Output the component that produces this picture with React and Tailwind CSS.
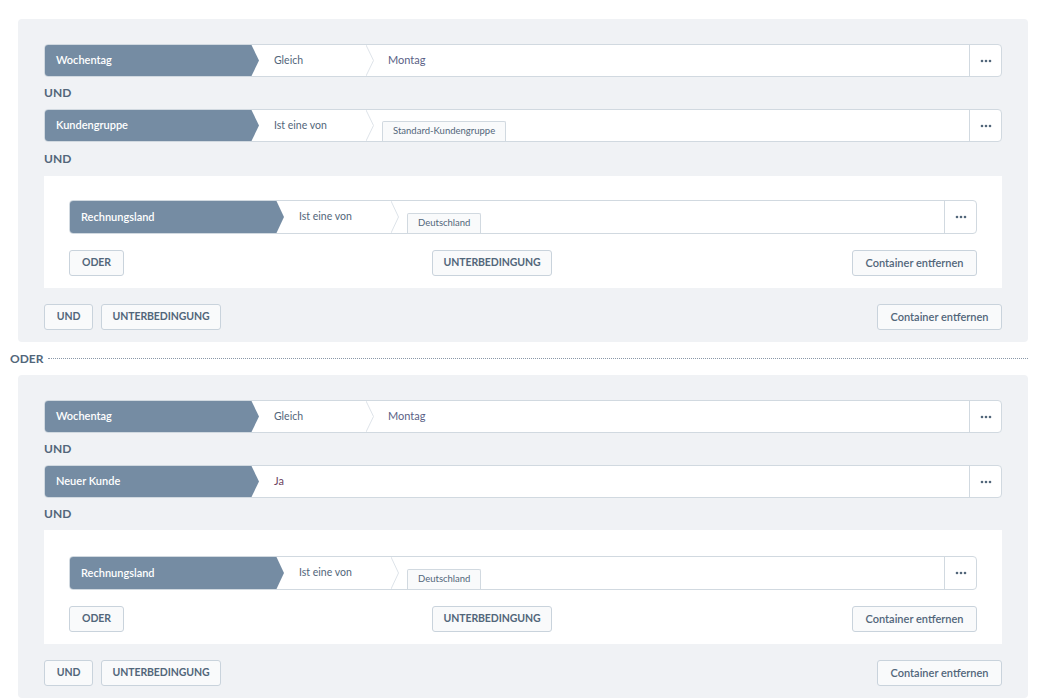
import React from "react";

const FONT = { fontFamily: "Lato, 'Noto Sans', sans-serif" };

function Chevron() {
  return (
    <svg width="8" height="32" viewBox="0 0 8 32" className="shrink-0 h-full" preserveAspectRatio="none">
      <polyline points="0,0 7.5,16 0,32" fill="none" stroke="#dde3e9" strokeWidth="1" />
    </svg>
  );
}

function Dots() {
  return (
    <div className="flex w-[32px] shrink-0 items-center justify-center border-l border-[#d1d9e0]">
      <svg width="12" height="4" viewBox="0 0 12 4">
        <circle cx="2" cy="2" r="1.3" fill="#52667a" />
        <circle cx="6" cy="2" r="1.3" fill="#52667a" />
        <circle cx="10" cy="2" r="1.3" fill="#52667a" />
      </svg>
    </div>
  );
}

function Tag({ children }) {
  return (
    <div className="ml-[8px] flex h-[20px] items-center self-end rounded-t-[2px] border border-b-0 border-[#d1d9e0] bg-[#f9fafb] px-[10px] text-[9.5px] text-[#52667a]">
      {children}
    </div>
  );
}

function Row({ label, op, value, tag, tall }) {
  return (
    <div
      className={
        "flex overflow-hidden rounded-[4px] border border-[#d1d9e0] bg-white " +
        (tall ? "h-[34px]" : "h-[33px]")
      }
    >
      <div className="-my-px -ml-px flex w-[215px] shrink-0 items-center rounded-l-[4px] bg-[#758ca3] pl-[12px] text-[11px] font-semibold text-white [clip-path:polygon(0_0,calc(100%-8px)_0,100%_50%,calc(100%-8px)_100%,0_100%)]">
        {label}
      </div>
      {op ? (
        <>
          <div className="flex w-[107px] shrink-0 items-center pl-[15px] text-[10.5px] text-[#52667a]">{op}</div>
          <Chevron />
          {tag ? (
            <div className="flex flex-1">
              <Tag>{tag}</Tag>
            </div>
          ) : (
            <div className="flex flex-1 items-center pl-[14px] text-[11px] text-[#5a5f86]">{value}</div>
          )}
        </>
      ) : (
        <div className="flex flex-1 items-center pl-[15px] text-[11px] text-[#6b3f5e]">{value}</div>
      )}
      <Dots />
    </div>
  );
}

function Btn({ children, w, upper = true }) {
  return (
    <button
      className={
        "flex h-[26px] shrink-0 items-center justify-center rounded-[3px] border border-[#c9d3dc] bg-[#f9fafb] text-[#52667a] " +
        (upper ? "text-[10.5px] font-bold tracking-[-0.1px]" : "text-[11px] font-semibold")
      }
      style={{ width: w }}
    >
      {children}
    </button>
  );
}

function Group({ second }) {
  return (
    <div className="ml-[8px] rounded-[4px] bg-[#f0f2f5] px-[26px] pt-[25px] pb-[12px]">
      <Row label="Wochentag" op="Gleich" value="Montag" />
      <div className="flex h-[32px] items-center text-[12px] font-bold text-[#52667a]">UND</div>
      {second ? (
        <Row label="Neuer Kunde" value="Ja" />
      ) : (
        <Row label="Kundengruppe" op="Ist eine von" tag="Standard-Kundengruppe" />
      )}
      <div
        className={
          "flex items-center text-[12px] font-bold text-[#52667a] " + (second ? "h-[32px]" : "h-[34px]")
        }
      >
        UND
      </div>
      <div className={"bg-white px-[25px] pb-[12px] " + (second ? "pt-[26px]" : "pt-[24px]")}>
        <Row label="Rechnungsland" op="Ist eine von" tag="Deutschland" tall />
        <div className="mt-[16px] flex items-center">
          <Btn w="55px">ODER</Btn>
          <div className="ml-[308px]">
            <Btn w="120px">UNTERBEDINGUNG</Btn>
          </div>
          <div className="ml-auto">
            <Btn w="125px" upper={false}>Container entfernen</Btn>
          </div>
        </div>
      </div>
      <div className="mt-[16px] flex items-center">
        <Btn w="49px">UND</Btn>
        <div className="ml-[8px]">
          <Btn w="120px">UNTERBEDINGUNG</Btn>
        </div>
        <div className="ml-auto">
          <Btn w="125px" upper={false}>Container entfernen</Btn>
        </div>
      </div>
    </div>
  );
}

export default function App() {
  return (
    <div className="min-h-[700px] bg-white pt-[19px] pl-[10px] pr-[19px]" style={FONT}>
      <Group />
      <div className="flex h-[33px] items-center">
        <span className="text-[12px] font-bold text-[#52667a]">ODER</span>
        <div className="ml-[5px] flex-1 border-t border-dotted border-[#8a98a8]" />
      </div>
      <Group second />
    </div>
  );
}
